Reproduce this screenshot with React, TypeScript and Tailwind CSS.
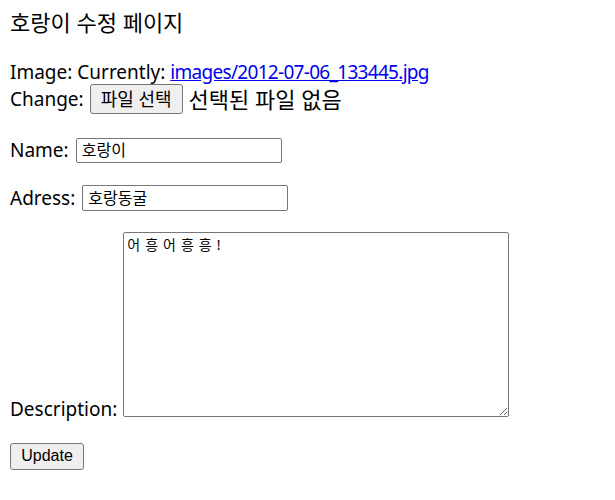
import React from 'react'

const sans = 'font-["Noto_Sans","Noto_Sans_CJK_KR",sans-serif]'

export default function App() {
  return (
    <div className={`min-h-[500px] w-[615px] bg-white px-[10px] pt-[9px] text-[19px] leading-[26px] text-black ${sans}`}>
      {/* page title */}
      <div className="h-[26px] text-[22px]">호랑이 수정 페이지</div>

      <form className="flex flex-col" onSubmit={(e) => e.preventDefault()}>
        {/* current image + file picker */}
        <div className="mt-[24px] flex h-[26px] items-center whitespace-nowrap">
          <span>Image: Currently:&nbsp;</span>
          <a href="#" className="tracking-[-0.7px] text-[#0000ee] underline">
            images/2012-07-06_133445.jpg
          </a>
        </div>
        <div className="flex h-[28px] items-center gap-[6px] whitespace-nowrap">
          <span>Change:</span>
          <button
            type="button"
            className="h-[30px] rounded-[3px] border border-[#767676] bg-[#efefef] px-[10px] text-[18px] leading-none"
          >
            파일 선택
          </button>
          <span className="text-[22px]">선택된 파일 없음</span>
        </div>

        {/* name */}
        <div className="mt-[24px] flex h-[26px] items-center gap-[7px]">
          <span>Name:</span>
          <input
            defaultValue="호랑이"
            className="h-[25px] w-[206px] rounded-[2px] border border-[#767676] px-[5px] text-[16px] outline-none"
          />
        </div>

        {/* address */}
        <div className="mt-[22px] flex h-[26px] items-center gap-[7px]">
          <span>Adress:</span>
          <input
            defaultValue="호랑동굴"
            className="h-[26px] w-[206px] rounded-[2px] border border-[#767676] px-[5px] text-[16px] outline-none"
          />
        </div>

        {/* description */}
        <div className="mt-[21px] flex items-end gap-[6px]">
          <span className="leading-[16px]">Description:</span>
          <textarea
            defaultValue="어흥어흥흥!"
            className="h-[185px] w-[386px] resize rounded-[2px] border border-[#767676] px-[3px] py-[2px] text-[14px] leading-[20px] tracking-[5px] outline-none"
          />
        </div>

        <div className="mt-[24px]">
          <button
            type="submit"
            className='h-[27px] w-[74px] rounded-[3px] border border-[#767676] bg-[#efefef] font-["Liberation_Sans",sans-serif] text-[16px] leading-none'
          >
            Update
          </button>
        </div>
      </form>
    </div>
  )
}
